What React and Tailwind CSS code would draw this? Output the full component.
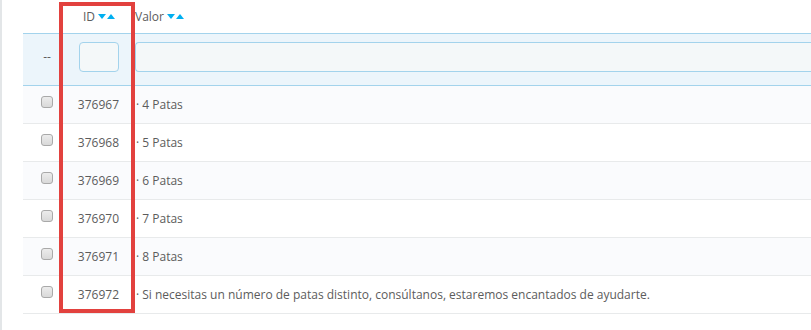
const rows = [
  { id: '376967', valor: '· 4 Patas' },
  { id: '376968', valor: '· 5 Patas' },
  { id: '376969', valor: '· 6 Patas' },
  { id: '376970', valor: '· 7 Patas' },
  { id: '376971', valor: '· 8 Patas' },
  { id: '376972', valor: '· Si necesitas un número de patas distinto, consúltanos, estaremos encantados de ayudarte.' },
];

function SortIcons() {
  return (
    <span className="ml-[3px] inline-flex items-center gap-[1px]">
      <svg width="8" height="5" viewBox="0 0 8 5">
        <path d="M0 0H8L4 5Z" fill="#00aff0" />
      </svg>
      <svg width="8" height="5" viewBox="0 0 8 5">
        <path d="M0 5H8L4 0Z" fill="#00aff0" />
      </svg>
    </span>
  );
}

function Checkbox() {
  return (
    <span className="block h-[12px] w-[12px] rounded-[3px] border border-[#a9a9a9] bg-gradient-to-b from-[#ececec] to-[#d9d9d9]" />
  );
}

export default function App() {
  return (
    <div className="relative h-[330px] w-[811px] overflow-hidden border-l-2 border-[#e3e6e8] bg-white pl-[21px] font-['Open_Sans',sans-serif] text-[12px] text-[#5c5c5c]">
      <div className="flex h-[34px] items-center border-b border-[#a3d3ec]">
        <div className="w-[48px]" />
        <div className="flex w-[56px] items-center justify-end pr-[12px]">
          ID
          <SortIcons />
        </div>
        <div className="flex flex-1 items-center pl-[8px]">
          Valor
          <SortIcons />
        </div>
      </div>

      <div className="flex h-[52px] items-start border-b border-[#a3d3ec] bg-[#ecf5fb] pt-[8px]">
        <div className="flex h-[30px] w-[48px] items-center justify-center">--</div>
        <div className="flex w-[56px] justify-end pr-[8px]">
          <input className="h-[30px] w-[40px] rounded-[4px] border border-[#a3d3ec] bg-[#f4f8f9] outline-none" />
        </div>
        <div className="flex-1 pl-[8px]">
          <input className="h-[30px] w-full rounded-l-[4px] border border-r-0 border-[#a3d3ec] bg-[#f4f8f9] outline-none" />
        </div>
      </div>

      {rows.map((r, i) => (
        <div
          key={r.id}
          className={
            i % 2 === 0
              ? 'flex h-[38px] items-center border-b border-[#e8eaeb] bg-[#fafbfd]'
              : 'flex h-[38px] items-center border-b border-[#e8eaeb] bg-white'
          }
        >
          <div className="flex w-[48px] justify-center self-start pt-[10px]">
            <Checkbox />
          </div>
          <div className="w-[56px] pr-[8px] text-right">{r.id}</div>
          <div className="flex-1 whitespace-nowrap pl-[9px]">{r.valor}</div>
        </div>
      ))}

      <div className="pointer-events-none absolute left-[57px] top-[2px] h-[311px] w-[76px] border-4 border-[#e2413e]" />
    </div>
  );
}
